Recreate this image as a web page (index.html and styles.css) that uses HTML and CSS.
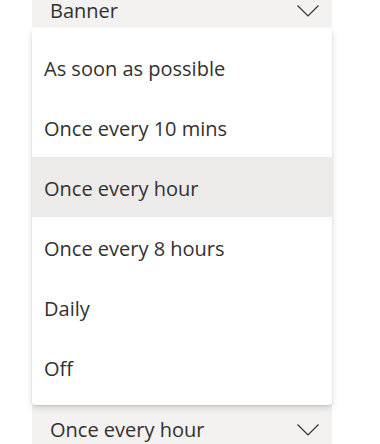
FILE: index.html
```html
<!DOCTYPE html>
<html lang="en">
<head>
  <meta charset="UTF-8" />
  <title>Notification frequency</title>
  <link rel="stylesheet" href="styles.css">
</head>
<body>

<div class="form">
  <div class="field field-top">
    <span class="field-text">Banner</span>
    <svg class="chevron" width="22" height="12" viewBox="0 0 22 12"><polyline points="0.5,0.5 11,11 21.5,0.5" /></svg>
  </div>

  <ul class="menu">
    <li class="option">As soon as possible</li>
    <li class="option">Once every 10 mins</li>
    <li class="option selected">Once every hour</li>
    <li class="option">Once every 8 hours</li>
    <li class="option">Daily</li>
    <li class="option">Off</li>
  </ul>

  <div class="field field-bottom">
    <span class="field-text">Once every hour</span>
    <svg class="chevron" width="22" height="12" viewBox="0 0 22 12"><polyline points="0.5,0.5 11,11 21.5,0.5" /></svg>
  </div>
</div>

</body>
</html>
```

FILE: styles.css
```css
body {
  margin: 0;
  padding: 0;
  background: #ffffff;
  color: #323130;
  font-family: "Open Sans", "Noto Sans", sans-serif;
  font-size: 20px;
  overflow: hidden;
}
.form {
  width: 300px;
  margin-left: 32px;
}
.field {
  display: flex;
  align-items: center;
  justify-content: space-between;
  height: 32px;
  padding: 0 13px 0 18px;
  background: #f3f2f1;
}
.field-text {
  line-height: 20px;
}
.field-top {
  margin-top: -5px;
}
.field-bottom {
  height: 32px;
  padding-top: 9px;
}
.chevron polyline {
  fill: none;
  stroke: #323130;
  stroke-width: 1.2;
}
.menu {
  list-style: none;
  margin: 1px 0 0;
  padding: 9px 0 8px;
  background: #ffffff;
  border-radius: 4px;
  box-shadow: 0 3px 7px rgba(0, 0, 0, 0.14), 0 1px 2px rgba(0, 0, 0, 0.11);
  position: relative;
}
.option {
  display: flex;
  align-items: center;
  height: 60px;
  padding: 2px 12px 0;
  box-sizing: border-box;
}
.option.selected {
  background: #edebe9;
}
```
